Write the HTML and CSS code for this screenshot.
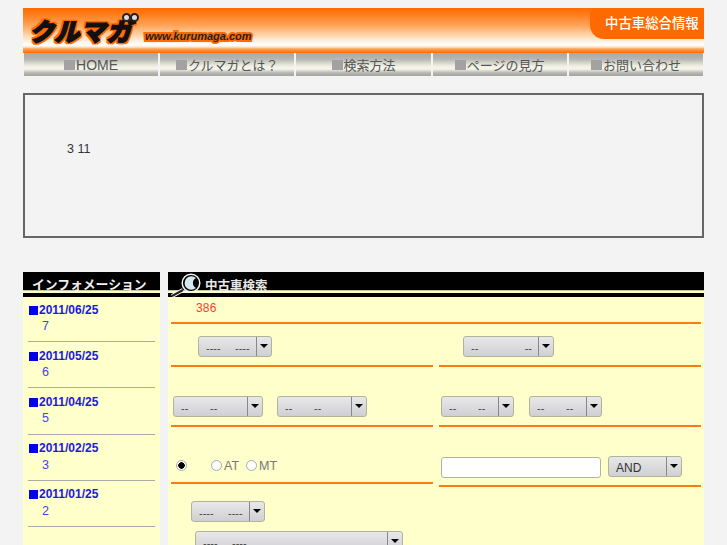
FILE: index.html
```html
<!DOCTYPE html>
<html lang="ja">
<head>
<meta charset="utf-8">
<title>クルマガ</title>
<link rel="stylesheet" href="styles.css">
</head>
<body>
<div class="page">
  <header class="masthead">
    <div class="logo"><span class="logo-word">クルマガ</span><span class="logo-eyes"><i></i><i></i></span><span class="logo-url">www.kurumaga.com</span></div>
    <div class="tag">中古車総合情報</div>
  </header>
  <nav class="nav">
    <a class="latin"><i></i>HOME</a>
    <a><i></i>クルマガとは？</a>
    <a><i></i>検索方法</a>
    <a><i></i>ページの見方</a>
    <a><i></i>お問い合わせ</a>
  </nav>
  <section class="notice">3 11</section>
  <div class="columns">
    <aside class="side">
      <h2 class="side-title"><span>インフォメーション</span></h2>
      <div class="news">
        <div class="news-item"><div class="news-date"><i></i>2011/06/25</div><div class="news-text">7</div></div>
        <div class="news-item"><div class="news-date"><i></i>2011/05/25</div><div class="news-text">6</div></div>
        <div class="news-item"><div class="news-date"><i></i>2011/04/25</div><div class="news-text">5</div></div>
        <div class="news-item"><div class="news-date"><i></i>2011/02/25</div><div class="news-text">3</div></div>
        <div class="news-item"><div class="news-date"><i></i>2011/01/25</div><div class="news-text">2</div></div>
      </div>
    </aside>
    <main class="search">
      <h2 class="search-title">
        <svg class="lens" width="36" height="25" viewBox="0 0 36 25"><path d="M3 24 L14 18" stroke="#fff" stroke-width="4" fill="none"/><path d="M3 24 L14 18" stroke="#222" stroke-width="2" fill="none"/><circle cx="22" cy="11" r="8.8" fill="#000" stroke="#f4f4f4" stroke-width="1.5"/><path d="M27 6 A6.8 6.8 0 1 0 27 16 A5.6 5.6 0 0 1 27 6Z" fill="#d3e8ef"/></svg>
        <span>中古車検索</span>
      </h2>
      <div class="count"><span>386</span></div>
      <div class="form">
        <div class="cell cell-a c-left">
          <div class="sel w74"><span class="val"><b>----</b><b>----</b></span><span class="arrow"></span></div>
        </div>
        <div class="cell cell-a c-right">
          <div class="sel w91"><span class="val wide"><b>--</b><b>--</b></span><span class="arrow"></span></div>
        </div>
        <div class="cell cell-b">
          <div class="sel w90"><span class="val"><b>--</b><b>--</b></span><span class="arrow"></span></div>
          <div class="sel w90"><span class="val"><b>--</b><b>--</b></span><span class="arrow"></span></div>
        </div>
        <div class="cell cell-b cell-b2">
          <div class="sel w73"><span class="val"><b>--</b><b>--</b></span><span class="arrow"></span></div>
          <div class="sel w73"><span class="val"><b>--</b><b>--</b></span><span class="arrow"></span></div>
        </div>
        <div class="cell cell-c">
          <span class="radio on"></span>
          <label class="opt"><span class="radio"></span>AT</label>
          <label class="opt"><span class="radio"></span>MT</label>
        </div>
        <div class="cell cell-d">
          <div class="textbox"></div>
          <div class="sel w74 and"><span class="val">AND</span><span class="arrow"></span></div>
        </div>
        <div class="cell cell-e">
          <div class="sel w74"><span class="val"><b>----</b><b>----</b></span><span class="arrow"></span></div>
          <div class="sel w208"><span class="val"><b>----</b><b>----</b></span><span class="arrow"></span></div>
        </div>
      </div>
    </main>
  </div>
</div>
</body>
</html>
```
FILE: styles.css
```css
* { box-sizing: border-box; }
html, body { margin: 0; height: 545px; overflow: hidden; }
body { background: #f3f3f3; font-family: "Liberation Sans", "Noto Sans CJK JP", sans-serif; }
.page { width: 681px; margin-left: 23px; padding-top: 8px; }

.masthead { height: 45px; display: flex; justify-content: space-between; background: linear-gradient(#ff6a00 0, #ff7c18 6px, #ffa65c 18px, #ffd9b3 28px, #fff4e6 34px, #fff 37px, #ffe6cc 39px, #ffa050 41px, #ff6a00 45px); }
.logo { position: relative; width: 300px; }
.logo-word { position: absolute; left: 6px; top: 8px; font: italic 900 25px/28px "Noto Sans CJK JP", sans-serif; letter-spacing: 1px; color: #111; -webkit-text-stroke: 1.4px #111; text-shadow: 2px 0 0 #ff6a00, -2px 0 0 #ff6a00, 0 2px 0 #ff6a00, 0 -2px 0 #ff6a00, 2px 2px 0 #ff6a00, -2px 2px 0 #ff6a00, 2px -2px 0 #ff6a00, -2px -2px 0 #ff6a00; }
.logo-eyes { position: absolute; left: 99px; top: 5px; display: flex; }
.logo-eyes i { width: 9px; height: 9px; margin-right: -1px; border-radius: 50%; background: #ddd; border: 2px solid #222; }
.logo-url { position: absolute; left: 122px; top: 21px; font: italic 700 11px/14px "Liberation Sans", sans-serif; color: #222; -webkit-text-stroke: 4px #ff6a00; paint-order: stroke fill; }
.tag { width: 114px; height: 31px; padding: 6px 0 0 15px; background: #ff6a00; border-radius: 0 0 0 14px; color: #fff; font: 500 13.4px/17px "Noto Sans CJK JP", sans-serif; white-space: nowrap; }

.nav { display: flex; gap: 2px; margin: 0 1px; height: 23px; }
.nav a { flex: 1; display: flex; align-items: center; justify-content: center; color: #555; font-size: 13px; background: linear-gradient(#a8a9a5 0, #b5b6b1 6px, #eeeee4 13px, #f6f6ea 16px, #b5b5b0 20px, #a3a3a0 23px); }
.nav a.latin { font-size: 14px; padding-top: 1px; }
.nav i { width: 11px; height: 10px; background: #a2a2a2; margin-right: 1px; }

.notice { height: 145px; margin-top: 17px; padding: 47px 0 0 42px; border: 2px solid #666; font-size: 12.5px; line-height: 14px; color: #333; }

.columns { display: flex; gap: 8px; margin-top: 34px; height: 273px; }
.side { width: 137px; background: #ffffcc; }
.side-title, .search-title { margin: 0; height: 25px; background: linear-gradient(#000 18px, #8a8a70 18px, #ffffcc 19px, #ffffcc 21px, #000 21px); }
.side-title { padding: 4px 0 0 9px; }
.side-title span { color: #f0f0f0; font: 700 12.8px/15px "Noto Sans CJK JP", sans-serif; white-space: nowrap; display: block; }
.news { padding: 0 5px; }
.news-item { height: 46.2px; padding-top: 5px; border-bottom: 1px solid #aaa; }
.news-item:first-child { height: 45.2px; padding-top: 4px; }
.news-date { display: flex; align-items: center; height: 17px; font-size: 12px; font-weight: 700; color: #1a1ae0; }
.news-date i { width: 9px; height: 9px; margin: 1px 1px 0 1px; background: #0000e8; }
.news-text { margin: 1px 0 0 14px; font-size: 12.5px; line-height: 15px; color: #4646dd; }

.search { flex: 1; background: #ffffcc; }
.search-title { display: flex; align-items: flex-start; }
.lens { margin-left: 1px; flex: none; }
.search-title span { margin: 5px 0 0 0; color: #e6e6e6; font: 700 12.5px/15px "Noto Sans CJK JP", sans-serif; }
.count { margin: 0 3px; height: 27px; border-bottom: 2px solid #ff7a14; padding: 4px 0 0 25px; color: #ff3b30; font-size: 12px; line-height: 14px; }
.count span { letter-spacing: .2px; }

.form { display: grid; grid-template-columns: 262px 262px; column-gap: 6px; margin-left: 3px; grid-template-rows: 43px 60px 60px 50px; }
.cell { border-bottom: 2px solid #ff7a14; display: flex; gap: 15px; align-items: flex-start; }
.cell-a { padding-top: 12px; }
.c-left { padding-left: 27px; }
.c-right { padding-left: 24px; }
.cell-b { padding: 29px 0 0 2px; gap: 14px; }
.cell-b2 { gap: 15px; }
.cell-c { height: 57px; padding: 33px 0 0 5px; gap: 0; font-size: 12.5px; color: #777; }
.cell-d { padding: 30px 0 0 2px; gap: 7px; }
.cell-e { grid-column: 1; border: 0; display: block; padding: 14px 0 0 20px; }
.cell-e .sel + .sel { margin: 9px 0 0 4px; }

.sel { height: 21px; display: flex; border: 1px solid #b3b39a; border-radius: 3px; background: linear-gradient(#e8e8ea, #d0d0d4); font-size: 11px; color: #444; }
.val { flex: 1; min-width: 0; display: flex; align-items: center; padding: 3px 0 0 7px; }
.val b { font-weight: 400; width: 29px; flex: none; }
.val b:last-child { width: auto; }
.val.wide { justify-content: space-between; padding-right: 6px; }
.val.wide b { width: auto; }
.arrow { flex: none; width: 15px; border-left: 1px solid #888; position: relative; }
.arrow::after { content: ""; position: absolute; left: 3px; top: 7px; border: 4px solid transparent; border-top: 4px solid #000; border-bottom: 0; }
.w74 { width: 74px; }
.w73 { width: 73px; }
.w90 { width: 90px; }
.w91 { width: 91px; }
.w208 { width: 208px; }
.sel.and { margin-top: -1px; font-size: 12px; color: #333; }
.and .val { padding-top: 2px; }

.radio { display: inline-block; width: 11px; height: 11px; border-radius: 50%; border: 1px solid #aaa; background: #fff; flex: none; }
.radio.on { background: radial-gradient(circle, #000 0 3px, #fff 3.5px); margin-right: 24px; }
.opt { display: inline-flex; align-items: center; gap: 2px; height: 11px; margin-right: 7px; }
.textbox { width: 160px; height: 21px; background: #fff; border: 1px solid #b3b39a; border-radius: 3px; }
```
